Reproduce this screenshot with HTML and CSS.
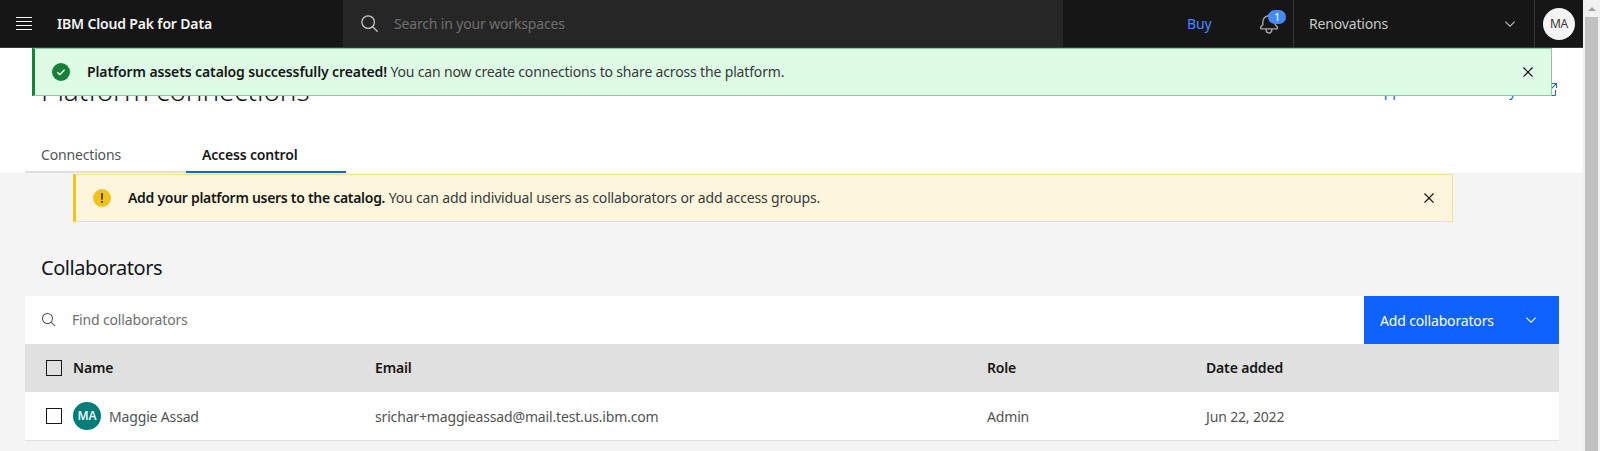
FILE: index.html
```html
<!DOCTYPE html>
<html lang="en">
<head>
    <meta charset="UTF-8">
    <meta name="viewport" content="width=device-width, initial-scale=1.0">
    <title>Platform connections</title>
    <link rel="stylesheet" href="styles.css">
</head>
<body>
    <svg class="icon-defs" aria-hidden="true">
        <symbol id="i-search" viewBox="0 0 32 32"><path d="M29 27.5859l-7.5521-7.5521a11.0177 11.0177 0 10-1.4141 1.4141L27.5859 29zM4 13a9 9 0 119 9A9.01 9.01 0 014 13z"/></symbol>
        <symbol id="i-close" viewBox="0 0 32 32"><path d="M24 9.4L22.6 8 16 14.6 9.4 8 8 9.4 14.6 16 8 22.6 9.4 24 16 17.4 22.6 24 24 22.6 17.4 16 24 9.4z"/></symbol>
        <symbol id="i-chevron" viewBox="0 0 16 16"><path d="M8 11L3 6 3.7 5.3 8 9.6 12.3 5.3 13 6z"/></symbol>
        <symbol id="i-launch" viewBox="0 0 32 32"><path d="M26,28H6a2.0027,2.0027,0,0,1-2-2V6A2.0027,2.0027,0,0,1,6,4H16V6H6V26H26V16h2V26A2.0027,2.0027,0,0,1,26,28Z"/><path d="M20 2 20 4 26.586 4 18 12.586 19.414 14 28 5.414 28 12 30 12 30 2 20 2"/></symbol>
        <symbol id="i-bell" viewBox="0 0 32 32"><path d="M28.7071,19.293,26,16.5859V13a10.0136,10.0136,0,0,0-9-9.9492V1H15V3.0508A10.0136,10.0136,0,0,0,6,13v3.5859L3.2929,19.293A1,1,0,0,0,3,20v3a1,1,0,0,0,1,1h7v.7768a5.152,5.152,0,0,0,4.5,5.1987A5.0057,5.0057,0,0,0,21,25V24h7a1,1,0,0,0,1-1V20A1,1,0,0,0,28.7071,19.293ZM19,25a3,3,0,0,1-6,0V24h6Zm8-3H5V20.4141L7.707,17.707A1,1,0,0,0,8,17V13a8,8,0,0,1,16,0v4a1,1,0,0,0,.293.707L27,20.4141Z"/></symbol>
    </svg>

    <div class="app">
        <div class="main">
            <!-- Top bar -->
            <header class="topbar">
                <button class="hamburger" aria-label="Menu">
                    <span></span><span></span><span></span><span></span>
                </button>
                <div class="brand">IBM Cloud Pak for Data</div>
                <div class="global-search">
                    <svg class="icon-20"><use href="#i-search"/></svg>
                    <span>Search in your workspaces</span>
                </div>
                <a class="buy">Buy</a>
                <div class="bell">
                    <svg class="icon-22"><use href="#i-bell"/></svg>
                    <span class="bell-count">1</span>
                </div>
                <div class="account">
                    <span>Renovations</span>
                    <svg class="icon-16"><use href="#i-chevron"/></svg>
                </div>
                <div class="user-cell"><div class="user-avatar">MA</div></div>
            </header>

            <div class="toast toast-success">
                <svg class="status-icon" viewBox="0 0 18 18">
                    <circle cx="9" cy="9" r="9" fill="#198038"/>
                    <path d="M5.4 9.2l2.4 2.4 4.8-4.8" fill="none" stroke="#fff" stroke-width="1.3"/>
                </svg>
                <p><b>Platform assets catalog successfully created!</b> You can now create connections to share across the platform.</p>
                <svg class="icon-20 close"><use href="#i-close"/></svg>
            </div>

            <!-- Page heading and tabs -->
            <section class="page-head">
                <div class="title-row">
                    <h1>Platform connections</h1>
                    <a class="doc-link">Supported connectivity <svg class="icon-16"><use href="#i-launch"/></svg></a>
                </div>
                <nav class="tabs">
                    <a class="tab">Connections</a>
                    <a class="tab tab-active">Access control</a>
                </nav>
            </section>

            <section class="page-body">
                <div class="notice">
                    <svg class="status-icon" viewBox="0 0 18 18">
                        <circle cx="9" cy="9" r="9" fill="#f1c21b"/>
                        <rect x="8.3" y="4" width="1.4" height="6.6" fill="#161616"/>
                        <rect x="8.2" y="12" width="1.6" height="1.7" fill="#161616"/>
                    </svg>
                    <p><b>Add your platform users to the catalog.</b> You can add individual users as collaborators or add access groups.</p>
                    <svg class="icon-20 close"><use href="#i-close"/></svg>
                </div>

                <h2>Collaborators</h2>

                <div class="panel">
                    <div class="toolbar">
                        <svg class="icon-16 find-icon"><use href="#i-search"/></svg>
                        <span class="find-text">Find collaborators</span>
                        <button class="add-btn">
                            <span>Add collaborators</span>
                            <svg class="icon-16"><use href="#i-chevron"/></svg>
                        </button>
                    </div>
                    <div class="row row-head">
                        <span class="check"></span>
                        <span>Name</span>
                        <span>Email</span>
                        <span>Role</span>
                        <span>Date added</span>
                    </div>
                    <div class="row">
                        <span class="check"></span>
                        <span class="person"><span class="person-avatar">MA</span>Maggie Assad</span>
                        <span>srichar+maggieassad@mail.test.us.ibm.com</span>
                        <span>Admin</span>
                        <span>Jun 22, 2022</span>
                    </div>
                </div>
            </section>
        </div>

        <!-- Browser scrollbar -->
        <div class="scrollbar">
            <div class="scroll-up"></div>
            <div class="scroll-thumb"></div>
        </div>
    </div>
</body>
</html>
```

FILE: styles.css
```css
* {
    box-sizing: border-box;
}

html, body {
    margin: 0;
    height: 100%;
    overflow: hidden;
}

body {
    font-family: "Noto Sans", Arial, sans-serif;
    font-size: 14px;
    letter-spacing: -0.16px;
    color: #161616;
    background-color: #f4f4f4;
}

p, h1, h2 {
    margin: 0;
    font-weight: 400;
}

b {
    font-weight: 600;
}

.icon-defs {
    display: none;
}

.icon-16, .icon-20, .icon-22 {
    fill: currentColor;
    flex: none;
}

.icon-16 { width: 16px; height: 16px; }
.icon-20 { width: 20px; height: 20px; }
.icon-22 { width: 22px; height: 22px; }

.app {
    display: flex;
    height: 451px;
}

.main {
    position: relative;
    flex: 1;
    min-width: 0;
    overflow: hidden;
}

/* Top bar */
.topbar {
    display: flex;
    align-items: center;
    height: 48px;
    background-color: #161616;
    border-bottom: 1px solid #393939;
    color: #c6c6c6;
}

.hamburger {
    display: flex;
    flex-direction: column;
    gap: 3px;
    width: 16px;
    margin-left: 16px;
    padding: 0;
    border: none;
    background: none;
}

.hamburger span {
    height: 1px;
    background-color: #f4f4f4;
}

.brand {
    width: 286px;
    margin-left: 25px;
    font-weight: 600;
    color: #f4f4f4;
}

.global-search {
    display: flex;
    align-items: center;
    gap: 14px;
    width: 720px;
    height: 47px;
    padding-left: 17px;
    background-color: #262626;
    color: #c6c6c6;
}

.global-search span {
    color: #6f6f6f;
}

.buy {
    width: 24px;
    margin-left: 124px;
    color: #4589ff;
}

.bell {
    position: relative;
    display: flex;
    margin-left: 47px;
    color: #a8a8a8;
}

.bell-count {
    position: absolute;
    top: -3px;
    left: 10px;
    width: 18px;
    height: 14px;
    border-radius: 7px;
    background-color: #4589ff;
    color: #fff;
    font-size: 11px;
    line-height: 14px;
    text-align: center;
}

.account {
    display: flex;
    align-items: center;
    justify-content: space-between;
    width: 242px;
    height: 47px;
    margin-left: 13px;
    padding: 0 16px 0 15px;
    border-left: 1px solid #393939;
    border-right: 1px solid #393939;
}

.user-cell {
    flex: 1;
    display: flex;
    justify-content: center;
}

.user-avatar {
    width: 32px;
    height: 32px;
    border-radius: 50%;
    background-color: #f4f4f4;
    color: #393939;
    font-size: 12px;
    line-height: 32px;
    text-align: center;
}

/* Notifications */
.toast, .notice {
    display: flex;
    align-items: center;
    height: 48px;
    padding: 0 13px 0 17px;
}

.toast {
    position: absolute;
    top: 48px;
    left: 32px;
    width: 1520px;
    background-color: #defbe6;
    border: 1px solid #8fc8a0;
    border-left: 3px solid #198038;
}

.notice {
    width: 1380px;
    margin: 1px 0 0 73px;
    background-color: #fdf6dd;
    border: 1px solid #f8e08e;
    border-left: 3px solid #f1c21b;
}

.status-icon {
    width: 18px;
    height: 18px;
    flex: none;
}

.toast p, .notice p {
    flex: 1;
    margin-left: 17px;
    padding-bottom: 2px;
    color: #393939;
    white-space: nowrap;
}

.toast b, .notice b {
    color: #161616;
}

.toast b {
    letter-spacing: -0.11px;
}

.notice b {
    letter-spacing: -0.29px;
}

.close {
    color: #161616;
}

/* Heading and tabs */
.page-head {
    height: 125px;
    padding-left: 25px;
    background-color: #fff;
}

.title-row {
    display: flex;
    justify-content: space-between;
    align-items: flex-end;
    height: 57px;
    padding: 0 25px 0 16px;
}

h1 {
    margin-bottom: -3px;
    font-size: 28px;
    font-weight: 300;
    line-height: 36px;
    letter-spacing: -0.1px;
}

.doc-link {
    display: flex;
    align-items: flex-end;
    gap: 26px;
    margin-bottom: 5px;
    color: #0f62fe;
    white-space: nowrap;
}

.doc-link svg {
    margin-bottom: 2px;
}

.tabs {
    display: flex;
    margin-top: 32px;
}

.tab {
    width: 161px;
    height: 36px;
    padding: 8px 0 0 16px;
    border-bottom: 2px solid #e0e0e0;
    color: #525252;
}

.tab-active {
    width: 160px;
    border-bottom-color: #0f62fe;
    color: #161616;
    font-weight: 600;
}

/* Collaborators */
h2 {
    margin: 32px 0 0 41px;
    font-size: 20px;
    line-height: 28px;
    letter-spacing: -0.45px;
}

.panel {
    width: 1534px;
    margin: 14px 0 0 25px;
}

.toolbar {
    display: flex;
    align-items: center;
    height: 48px;
    background-color: #fff;
}

.find-icon {
    margin-left: 16px;
    color: #525252;
}

.find-text {
    flex: 1;
    margin-left: 15px;
    padding-bottom: 2px;
    color: #6f6f6f;
}

.add-btn {
    display: flex;
    align-items: center;
    justify-content: space-between;
    width: 195px;
    height: 48px;
    padding: 0 20px 0 16px;
    border: none;
    background-color: #0f62fe;
    color: #fff;
    font: inherit;
    letter-spacing: inherit;
}

.row {
    display: grid;
    grid-template-columns: 27px 302px 612px 219px 1fr;
    align-items: center;
    height: 49px;
    padding-left: 21px;
    background-color: #fff;
    border-bottom: 1px solid #e0e0e0;
    color: #525252;
}

.row-head {
    height: 48px;
    padding-bottom: 2px;
    background-color: #e0e0e0;
    border-bottom: none;
    color: #161616;
    font-weight: 600;
}

.row-head .check {
    margin-top: 2px;
}

.check {
    width: 16px;
    height: 16px;
    border: 1px solid #161616;
}

.person {
    display: flex;
    align-items: center;
    gap: 8px;
}

.person-avatar {
    width: 28px;
    height: 28px;
    border-radius: 50%;
    background-color: #007d79;
    color: #f4f4f4;
    font-size: 12px;
    font-weight: 600;
    line-height: 28px;
    text-align: center;
}

/* Scrollbar */
.scrollbar {
    width: 17px;
    background-color: #f1f1f1;
    padding: 0 2px;
}

.scroll-up {
    width: 0;
    height: 0;
    margin: 7px auto 6px;
    border: 4px solid transparent;
    border-top: none;
    border-bottom: 4px solid #a3a3a3;
}

.scroll-thumb {
    height: 434px;
    background-color: #c1c1c1;
}
```
